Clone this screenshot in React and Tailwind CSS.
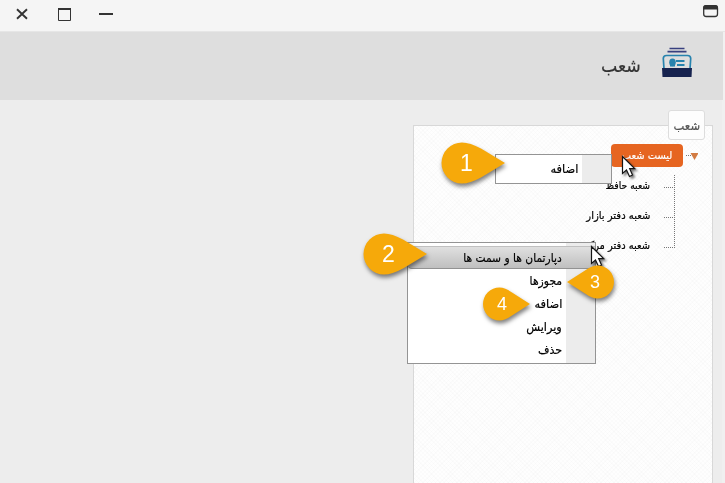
import React from "react";

const branches = [
  { name: "شعبه حافظ", fit: "scale-x-[0.84]" },
  { name: "شعبه دفتر بازار", fit: "scale-x-[0.91]" },
  { name: "شعبه دفتر مرکزی", fit: "scale-x-[0.9]" },
];

const menuItems = [
  { name: "مجوزها", fit: "scale-x-[0.9]" },
  { name: "اضافه", fit: "scale-x-[0.95]" },
  { name: "ویرایش", fit: "scale-x-[0.94]" },
  { name: "حذف", fit: "scale-x-[0.92]" },
];

function WindowBar() {
  return (
    <div dir="ltr" className="flex h-8 items-start justify-between border-b border-[#e6e6e6] bg-[#f5f5f5]">
      <svg className="h-8 w-[130px]" viewBox="0 0 130 32" fill="none" stroke="#333">
        <path d="M17 9.300 27 18.700M27 9.300 17 18.700" strokeWidth="1.9" />
        <path d="M58.500 9V20.500H70.500V9" strokeWidth="1" />
        <path d="M58 9H71" strokeWidth="2" />
        <path d="M99 14H113" strokeWidth="2" />
      </svg>
      <svg className="h-8 w-[30px]" viewBox="0 0 30 32">
        <rect x="8.700" y="5.700" width="13.800" height="10.800" rx="2.500" fill="#f5f5f5" stroke="#333" strokeWidth="1.300" />
        <path d="M8.200 9.500V8q0-3 3-3h8.800Q23 5 23 8v1.500z" fill="#333" />
      </svg>
    </div>
  );
}

function CardFileIcon() {
  return (
    <svg className="h-8 w-8" viewBox="0 0 32 32" fill="none">
      <path d="M8.500 2.500H23.500M6.500 5.700H25.500" stroke="#38407f" strokeWidth="1.700" />
      <path d="M3 23 2.300 12.500Q2.300 9.500 5.500 9.500H26.500Q29.700 9.500 29.700 12.500L29 23" stroke="#2783ae" strokeWidth="1.700" />
      <ellipse cx="11.500" cy="16.300" rx="3.300" ry="3.900" fill="#2783ae" />
      <path d="M9 18.500H14V20.500H9z" fill="#2783ae" />
      <path d="M15 15H23.500M16 19H23.500" stroke="#2783ae" strokeWidth="2" />
      <path d="M1 22H31L30.500 31H1.500z" fill="#17234f" />
    </svg>
  );
}

function Callout({ n, className, flip, small }) {
  return (
    <svg
      className={`absolute overflow-visible drop-shadow-[1px_3px_2px_rgba(0,0,0,0.5)] ${small ? "h-[34px] w-[47px]" : "h-[42px] w-[64px]"} ${className}`}
      viewBox={small ? "0 0 47 34" : "0 0 64 42"}
    >
      <path
        transform={flip ? "translate(47 0) scale(-1 1)" : undefined}
        d={
          small
            ? "M47 17 29 5.500Q22 .5 16.500 .5A16.500 16.500 0 0 0 16.500 33.500Q22 33.500 29 28.500Z"
            : "M64 21 40 6.500Q29 .5 21 .5A20.500 20.500 0 0 0 21 41.500Q29 41.500 40 35.500Z"
        }
        fill="#f6a90a"
      />
      <text
        x={small ? (flip ? 28 : 19) : 25.500}
        y={small ? 23 : 29}
        fill="white"
        textAnchor="middle"
        className={`font-[family-name:Liberation_Sans] ${small ? "text-[18px]" : "text-[23px]"}`}
      >
        {n}
      </text>
    </svg>
  );
}

function Cursor({ className }) {
  return (
    <svg className={`absolute h-[23px] w-[15px] overflow-visible drop-shadow-[2px_2px_1px_rgba(0,0,0,0.5)] ${className}`} viewBox="0 0 15 23">
      <path d="M.5.500V17.500L4.500 14 7.500 20.500 10.500 19 7.700 12.700H12.700Z" fill="white" stroke="#151515" strokeWidth="1.200" />
    </svg>
  );
}

function Tree() {
  return (
    <div className="flex flex-col pt-[18px]">
      <div className="flex h-[23px] items-center pr-[14px]">
        <svg className="mt-[3px] h-[8px] w-[15px]" viewBox="0 0 15 8">
          <path d="M7.500 0H15.500L11.500 7Z" fill="#d27b42" />
          <path d="M3 2.500H8" stroke="#777" strokeDasharray="1 1" />
        </svg>
        <div className="flex h-[23px] w-[72px] items-center justify-center rounded bg-[#e66521] text-[11px] whitespace-nowrap text-white">
          <span className="inline-block scale-x-[0.9] pt-px">لیست شعب</span>
        </div>
      </div>
      <div className="flex pt-2 pr-[37px]">
        <div className="h-[73px] w-px bg-[repeating-linear-gradient(to_bottom,#777_0_1px,transparent_1px_2px)]" />
        <ul className="flex flex-col">
          {branches.map((b) => (
            <li key={b.name} className="flex h-[30px] items-start">
              <span className="mt-3 h-px w-[10px] bg-[repeating-linear-gradient(to_right,#777_0_1px,transparent_1px_2px)]" />
              <span className={`mr-[14px] inline-block origin-right text-[11px] leading-[21px] whitespace-nowrap ${b.fit}`}>
                {b.name}
              </span>
            </li>
          ))}
        </ul>
      </div>
    </div>
  );
}

export default function App() {
  return (
    <div dir="rtl" className="relative flex h-[483px] w-[725px] flex-col overflow-hidden bg-[#ededed] font-[family-name:DejaVu_Sans,sans-serif] text-black [-webkit-text-stroke:0.200px]">
      <WindowBar />
      <div className="flex bg-[#f1f1f1] pr-[2px]">
        <header className="flex h-[68px] w-full bg-[#dedede] pt-[14px] pr-[30px]">
          <CardFileIcon />
          <h1 className="mt-1 mr-5 origin-right scale-x-[0.91] text-[19px] leading-[30px] text-[#333]">شعب</h1>
        </header>
      </div>
      <main className="flex flex-1 border-r-[3px] border-[#f0f0f0] pt-[25px] pr-[9px]">
        <section className="relative h-[370px] w-[300px] border border-[#d8d8d8] bg-[#fefefe] bg-[repeating-linear-gradient(45deg,transparent_0_2px,rgba(0,0,0,0.011)_2px_3px),repeating-linear-gradient(-45deg,transparent_0_2px,rgba(0,0,0,0.011)_2px_3px)]">
          <div className="absolute top-[-16px] right-[7px] flex h-[30px] w-[37px] items-center justify-center rounded-[3px] border border-[#ddd] bg-[#fdfdfd] text-[12px] text-[#555]">
            <span className="scale-x-[0.96] pt-px">شعب</span>
          </div>
          <Tree />
        </section>
      </main>

      <div className="absolute top-[154px] left-[495px] flex h-[30px] w-[117px] border border-[#949494] bg-white">
        <div className="w-[29px] bg-[#ececec]" />
        <span className="mr-[4px] origin-right scale-x-[0.95] text-[12px] leading-[29px]">اضافه</span>
      </div>

      <div className="absolute top-[242px] left-[407px] h-[122px] w-[189px] border border-[#949494] bg-[linear-gradient(to_left,#ececec_29px,white_29px)] pt-[3px]">
        <div className="flex h-[23px] items-center rounded-bl border-y border-t-[#c0c0c0] border-b-[#929292] bg-linear-to-b from-[#e0e0e0] to-[#bfbfbf] pr-[33px]">
          <span className="origin-right scale-x-[0.89] text-[12px] whitespace-nowrap">دپارتمان ها و سمت ها</span>
        </div>
        {menuItems.map((item) => (
          <div key={item.name} className="flex h-[23px] items-center pr-[33px]">
            <span className={`origin-right text-[12px] whitespace-nowrap ${item.fit}`}>{item.name}</span>
          </div>
        ))}
      </div>

      <Cursor className="top-[156px] left-[622px]" />
      <Cursor className="top-[246px] left-[591px]" />
      <Callout n="1" className="top-[142px] left-[441px]" />
      <Callout n="2" className="top-[233px] left-[363px]" />
      <Callout n="3" className="top-[265px] left-[567px]" flip small />
      <Callout n="4" className="top-[287px] left-[483px]" small />
    </div>
  );
}
